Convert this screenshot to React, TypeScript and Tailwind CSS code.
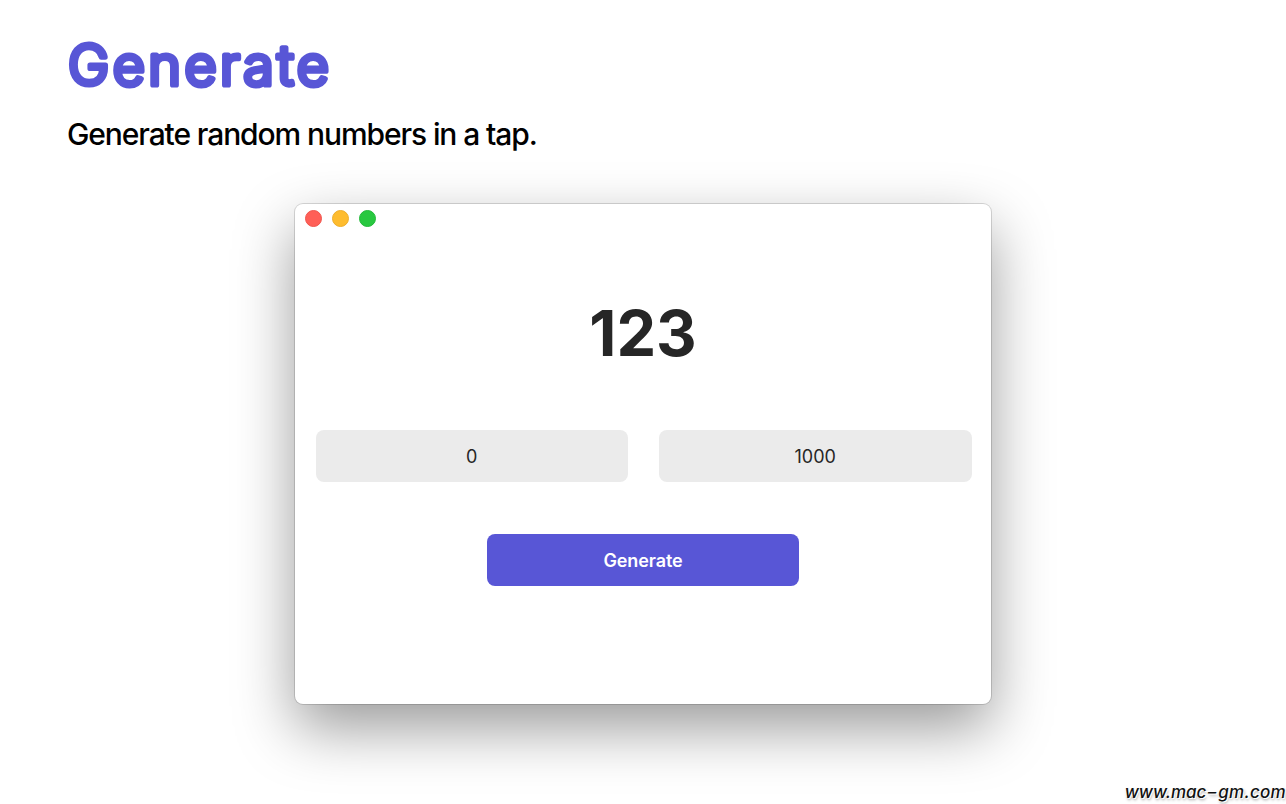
const WINDOW_BUTTONS = [
  { name: 'close', color: 'bg-[#ff5f57] border-[#f0554d]' },
  { name: 'minimise', color: 'bg-[#febc2e] border-[#eeae2a]' },
  { name: 'zoom', color: 'bg-[#28c840] border-[#23b93a]' },
];

function RangeField({ value }: { value: string }) {
  return (
    <input
      readOnly
      value={value}
      className="h-[52px] w-[312.5px] rounded-[8px] bg-[#ebebeb] text-center text-[18px] text-[#262626] outline-none"
    />
  );
}

function AppWindow() {
  return (
    <div className="mx-auto mt-[50px] flex h-[499.5px] w-[696px] flex-col rounded-[8px] bg-white shadow-[0_0_0_1px_rgba(0,0,0,0.14),0_24px_60px_rgba(0,0,0,0.4)]">
      <div className="flex h-[28px] items-center gap-[10px] pl-[10px]">
        {WINDOW_BUTTONS.map((button) => (
          <span key={button.name} className={`size-[17px] rounded-full border ${button.color}`} />
        ))}
      </div>
      <div className="mt-[69px] text-center text-[63px] leading-[64px] font-bold text-[#262626]">123</div>
      <div className="mt-[65px] flex justify-between pr-[19.5px] pl-[20.5px]">
        <RangeField value="0" />
        <RangeField value="1000" />
      </div>
      <button className="mx-auto mt-[52px] h-[52px] w-[312.5px] rounded-[8px] bg-[#5856d6] text-[18px] font-semibold tracking-[-0.1px] text-white">
        Generate
      </button>
    </div>
  );
}

export default function App() {
  return (
    <div className="relative h-[804px] overflow-hidden bg-white font-[Inter,sans-serif]">
      <header className="px-[67px] pt-[30px]">
        {/* Round joins soften the letter ends */}
        <h1 className="h-[72px] text-[55.5px] font-light text-[#5856d6]">
          <svg width="300" height="72" className="block overflow-visible">
            <text
              x="1"
              y="54.8"
              textLength="261"
              fill="currentColor"
              stroke="currentColor"
              strokeWidth="5.2"
              strokeLinejoin="round"
            >
              Generate
            </text>
          </svg>
        </h1>
        <p className="mt-[12px] text-[30px] leading-[40px] font-medium tracking-[-1.1px] text-black">
          Generate random numbers in a tap.
        </p>
      </header>
      <AppWindow />
      <div className="absolute right-0 bottom-0 flex text-[17px] leading-[24px] font-medium text-[#111] italic [font-feature-settings:'cv11'] [text-shadow:-1px_-1px_0_#fff,1px_1px_0_#fff,1px_2px_3px_#999]">
        <span>www.mac</span>
        <span className="mx-[2px] inline-block scale-x-150">-</span>
        <span className="tracking-[0.3px]">gm.com</span>
      </div>
    </div>
  );
}
